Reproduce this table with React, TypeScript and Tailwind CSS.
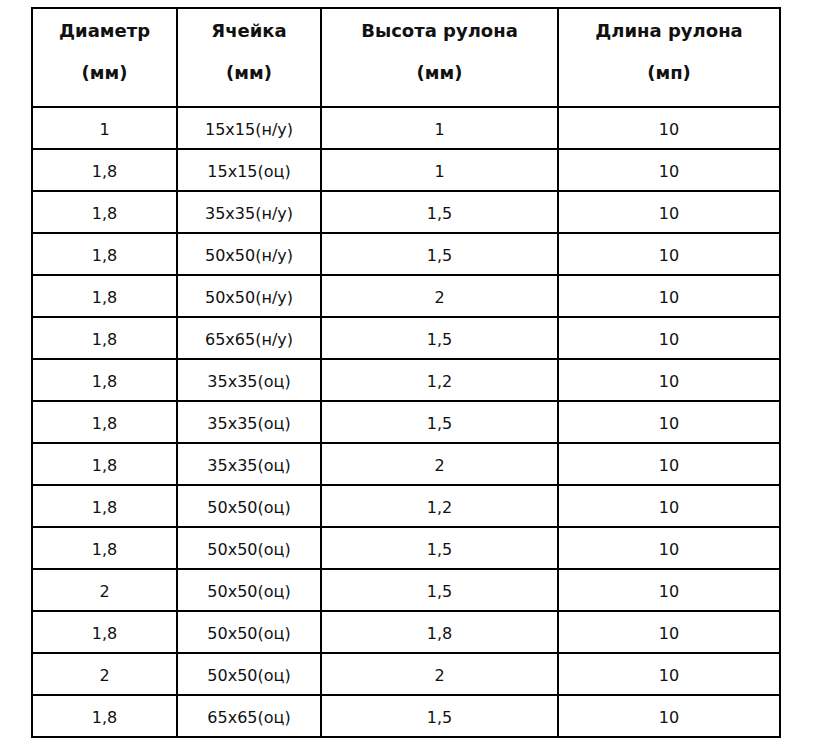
const rows: [string, string, string, string][] = [
  ["1", "15x15(н/у)", "1", "10"],
  ["1,8", "15x15(оц)", "1", "10"],
  ["1,8", "35x35(н/у)", "1,5", "10"],
  ["1,8", "50x50(н/у)", "1,5", "10"],
  ["1,8", "50x50(н/у)", "2", "10"],
  ["1,8", "65x65(н/у)", "1,5", "10"],
  ["1,8", "35x35(оц)", "1,2", "10"],
  ["1,8", "35x35(оц)", "1,5", "10"],
  ["1,8", "35x35(оц)", "2", "10"],
  ["1,8", "50x50(оц)", "1,2", "10"],
  ["1,8", "50x50(оц)", "1,5", "10"],
  ["2", "50x50(оц)", "1,5", "10"],
  ["1,8", "50x50(оц)", "1,8", "10"],
  ["2", "50x50(оц)", "2", "10"],
  ["1,8", "65x65(оц)", "1,5", "10"],
];

const headers: [string, string][] = [
  ["Диаметр", "(мм)"],
  ["Ячейка", "(мм)"],
  ["Высота рулона", "(мм)"],
  ["Длина рулона", "(мп)"],
];

export default function App() {
  return (
    <div className="w-[817px] h-[751px] bg-white overflow-hidden pt-[7px] pl-[31px] font-['DejaVu_Sans',Verdana,sans-serif] text-[#111]">
      <div className="grid grid-cols-[145px_144px_237px_222px] w-[750px] border-l-2 border-t-2 border-black">
        {/* header row */}
        {headers.map(([a, b], i) => (
          <div
            key={i}
            className="h-[99px] border-r-2 border-b-2 border-black text-center font-bold text-[18px] leading-[42px] pt-[1px]"
          >
            <div>{a}</div>
            <div>{b}</div>
          </div>
        ))}

        {/* data rows */}
        {rows.map((r, ri) =>
          r.map((c, ci) => (
            <div
              key={ri + "-" + ci}
              className="h-[42px] border-r-2 border-b-2 border-black flex items-center justify-center text-[16px] pt-[3px]"
            >
              {c}
            </div>
          ))
        )}
      </div>
    </div>
  );
}
